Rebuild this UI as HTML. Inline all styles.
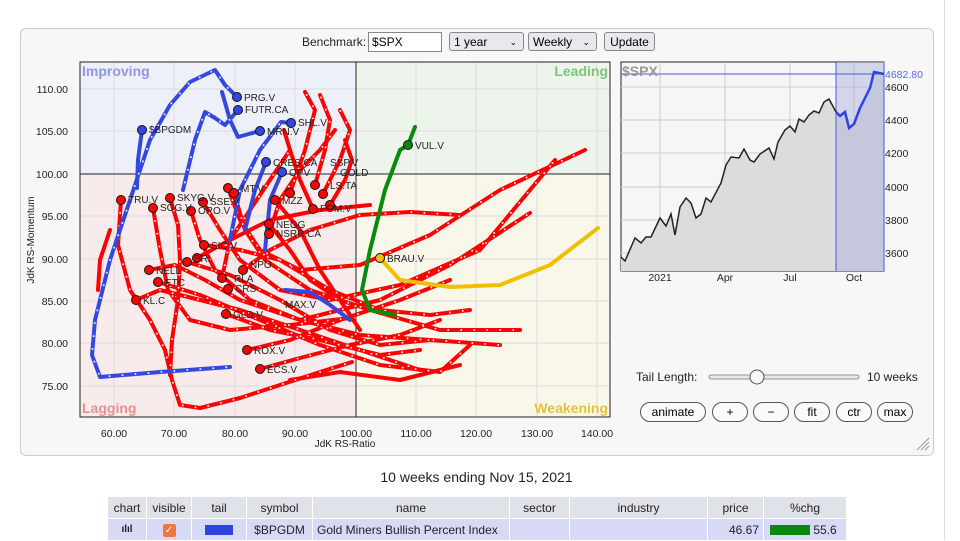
<!DOCTYPE html>
<html><head><meta charset="utf-8">
<style>
body{margin:0;width:960px;height:540px;overflow:hidden;background:#fff;font-family:"Liberation Sans",sans-serif;position:relative}
.box{position:absolute;left:20px;top:28px;width:912px;height:426px;background:#f7f7f8;border:1px solid #ccc;border-radius:6px}
.ctl{position:absolute;font-size:12px;color:#222}
.sel{position:absolute;top:32px;height:19px;border:1px solid #888;border-radius:3px;background:#e9e9ed;font-size:12px;line-height:18px;padding-left:4px;box-sizing:border-box}
.btn{position:absolute;top:402px;height:20px;border:1px solid #555;border-radius:10px;background:#fafafa;font-size:12px;text-align:center;line-height:19px;box-sizing:border-box}
table{position:absolute;left:107px;top:496px;border-collapse:collapse;font-size:12px;color:#222;table-layout:fixed;width:739px}
td,th{border:1px solid #fff;font-weight:normal;height:21px;padding:0 4px;text-align:center;white-space:nowrap;overflow:hidden}
th{background:#dfe2e8}
tr.r td{background:#d6daf5}
</style></head><body>
<div class="box"></div>
<div style="position:absolute;left:944px;top:0;width:16px;height:540px;background:#fff;border-left:1px solid #ddd"></div>
<div class="ctl" style="left:302px;top:35px">Benchmark:</div>
<div style="position:absolute;left:368px;top:32px;width:74px;height:20px;border:1px solid #888;background:#fff;font-size:12px;line-height:19px;padding-left:3px;box-sizing:border-box">$SPX</div>
<div class="sel" style="left:449px;width:75px">1 year<span style="position:absolute;right:6px;font-size:9px">&#8964;</span></div>
<div class="sel" style="left:528px;width:69px">Weekly<span style="position:absolute;right:6px;font-size:9px">&#8964;</span></div>
<div class="sel" style="left:604px;width:51px;text-align:center;padding:0">Update</div>

<svg width="960" height="540" style="position:absolute;left:0;top:0" font-family="Liberation Sans,sans-serif">
<rect x="80" y="62" width="276" height="112" fill="#edeff9"/>
<rect x="356" y="62" width="254" height="112" fill="#edf4ec"/>
<rect x="80" y="174" width="276" height="243" fill="#f8ebeb"/>
<rect x="356" y="174" width="254" height="243" fill="#f8f7ea"/>
<g stroke="#ddd" stroke-width="1">
<line x1="114" y1="62" x2="114" y2="417"/><line x1="174" y1="62" x2="174" y2="417"/><line x1="235" y1="62" x2="235" y2="417"/><line x1="295" y1="62" x2="295" y2="417"/><line x1="416" y1="62" x2="416" y2="417"/><line x1="476" y1="62" x2="476" y2="417"/><line x1="537" y1="62" x2="537" y2="417"/><line x1="597" y1="62" x2="597" y2="417"/>
<line x1="80" y1="89" x2="610" y2="89"/><line x1="80" y1="131" x2="610" y2="131"/><line x1="80" y1="216" x2="610" y2="216"/><line x1="80" y1="259" x2="610" y2="259"/><line x1="80" y1="301" x2="610" y2="301"/><line x1="80" y1="343" x2="610" y2="343"/><line x1="80" y1="386" x2="610" y2="386"/>
</g>
<line x1="80" y1="174" x2="610" y2="174" stroke="#222"/>
<line x1="356" y1="62" x2="356" y2="417" stroke="#222"/>
<rect x="80" y="62" width="530" height="355" fill="none" stroke="#222"/>
<g font-size="14" font-weight="bold">
<text x="82" y="76" fill="#8d97e8">Improving</text>
<text x="608" y="76" fill="#7cc47c" text-anchor="end">Leading</text>
<text x="82" y="413" fill="#e89090">Lagging</text>
<text x="608" y="413" fill="#e8c040" text-anchor="end">Weakening</text>
</g>
<g font-size="10.5" fill="#222" text-anchor="end">
<text x="68" y="93">110.00</text><text x="68" y="135">105.00</text><text x="68" y="178">100.00</text><text x="68" y="220">95.00</text><text x="68" y="263">90.00</text><text x="68" y="305">85.00</text><text x="68" y="347">80.00</text><text x="68" y="390">75.00</text>
</g>
<g font-size="10.5" fill="#222" text-anchor="middle">
<text x="114" y="437">60.00</text><text x="174" y="437">70.00</text><text x="235" y="437">80.00</text><text x="295" y="437">90.00</text><text x="356" y="437">100.00</text><text x="416" y="437">110.00</text><text x="476" y="437">120.00</text><text x="537" y="437">130.00</text><text x="597" y="437">140.00</text>
<text x="345" y="447" font-size="10">JdK RS-Ratio</text>
</g>
<text x="34" y="240" font-size="10" fill="#222" text-anchor="middle" transform="rotate(-90 34 240)">JdK RS-Momentum</text>

<g fill="none" stroke-linejoin="round" stroke-linecap="round">
<g stroke="#f00" stroke-width="4">
<path d="M121,200 L118,245 L130,290 L150,320 L165,350 L172,380 L180,405 L200,408 L240,398 L280,385 L320,372 L352,362"/>
<path d="M170,198 L178,225 L180,260 L178,300 L172,340 L170,375"/>
<path d="M153,208 L160,250 L168,290 L190,320 L230,330 L290,325 L350,318"/>
<path d="M136,300 L160,290 L200,300 L240,310 L300,330 L360,350 L420,370"/>
<path d="M149,270 L175,265 L205,280 L240,300 L300,320 L360,335 L430,340 L500,345"/>
<path d="M158,282 L200,295 L260,320 L320,345 L380,365 L440,372 L470,345"/>
<path d="M191,211 L200,240 L215,270 L250,300 L300,320 L380,300 L450,265 L530,213"/>
<path d="M203,202 L220,230 L240,260 L280,290 L330,300 L400,285 L480,250 L555,160"/>
<path d="M228,188 L240,220 L260,250 L300,270 L360,265 L430,235 L500,190 L585,150"/>
<path d="M234,193 L245,230 L265,260 L310,290 L370,310 L440,330 L520,330"/>
<path d="M204,245 L240,250 L280,260 L330,290 L380,310 L430,315 L470,310"/>
<path d="M187,262 L230,275 L280,300 L330,330 L380,345 L430,340"/>
<path d="M226,314 L270,330 L320,340 L380,355 L420,350"/>
<path d="M247,350 L290,340 L340,320 L400,300 L450,280"/>
<path d="M260,369 L300,358 L350,345 L400,335 L440,320"/>
<path d="M269,224 L290,250 L310,280 L340,300 L360,330"/>
<path d="M275,200 L300,230 L320,270 L340,300"/>
<path d="M315,185 L325,150 L330,120 L320,95"/>
<path d="M323,194 L340,160 L350,130 L340,110"/>
<path d="M290,193 L305,150 L315,110 L305,92"/>
<path d="M330,205 L345,180 L352,160 L345,140"/>
<path d="M313,209 L300,180 L290,150 L284,130"/>
<path d="M269,234 L280,200 L300,170 L320,150 L335,130"/>
<path d="M222,278 L230,240 L250,210 L270,180 L290,150"/>
<path d="M243,270 L270,250 L310,230 L360,215 L410,212 L460,215"/>
<path d="M197,258 L230,240 L270,220 L320,210 L370,205"/>
<path d="M110,230 L100,260 L98,290"/>
<path d="M290,380 L340,372 L400,380 L460,365"/>
</g>
<g stroke="#fff" stroke-width="2" stroke-dasharray="0 13" opacity=".9">
<path d="M121,200 L118,245 L130,290 L150,320 L165,350 L172,380 L180,405 L200,408 L240,398 L280,385 L320,372 L352,362"/>
<path d="M170,198 L178,225 L180,260 L178,300 L172,340 L170,375"/>
<path d="M153,208 L160,250 L168,290 L190,320 L230,330 L290,325 L350,318"/>
<path d="M136,300 L160,290 L200,300 L240,310 L300,330 L360,350 L420,370"/>
<path d="M149,270 L175,265 L205,280 L240,300 L300,320 L360,335 L430,340 L500,345"/>
<path d="M158,282 L200,295 L260,320 L320,345 L380,365 L440,372 L470,345"/>
<path d="M191,211 L200,240 L215,270 L250,300 L300,320 L380,300 L450,265 L530,213"/>
<path d="M203,202 L220,230 L240,260 L280,290 L330,300 L400,285 L480,250 L555,160"/>
<path d="M228,188 L240,220 L260,250 L300,270 L360,265 L430,235 L500,190 L585,150"/>
<path d="M234,193 L245,230 L265,260 L310,290 L370,310 L440,330 L520,330"/>
<path d="M204,245 L240,250 L280,260 L330,290 L380,310 L430,315 L470,310"/>
<path d="M187,262 L230,275 L280,300 L330,330 L380,345 L430,340"/>
<path d="M226,314 L270,330 L320,340 L380,355 L420,350"/>
<path d="M247,350 L290,340 L340,320 L400,300 L450,280"/>
<path d="M260,369 L300,358 L350,345 L400,335 L440,320"/>
<path d="M315,185 L325,150 L330,120 L320,95"/>
<path d="M323,194 L340,160 L350,130 L340,110"/>
<path d="M290,193 L305,150 L315,110 L305,92"/>
<path d="M269,234 L280,200 L300,170 L320,150 L335,130"/>
<path d="M222,278 L230,240 L250,210 L270,180 L290,150"/>
<path d="M243,270 L270,250 L310,230 L360,215 L410,212 L460,215"/>
</g>
<g stroke="#3348e0" stroke-width="4">
<path d="M237,97 L225,85 L215,70 L190,82 L170,105 L150,140 L130,200 L110,260 L95,320 L92,355 L100,377 L160,372 L230,367"/>
<path d="M142,130 L138,160 L137,188"/>
<path d="M238,110 L225,125 L215,118 L205,112 L195,140 L183,190"/>
<path d="M260,131 L245,135 L238,137 L230,120 L222,92"/>
<path d="M291,123 L281,122 L260,150 L240,190 L230,240"/>
<path d="M266,162 L255,190 L245,230"/>
<path d="M282,172 L270,200 L265,250"/>
<path d="M285,290 L310,292 L330,305 L350,320"/>
</g>
<g stroke="#fff" stroke-width="2" stroke-dasharray="0 13" opacity=".9">
<path d="M237,97 L225,85 L215,70 L190,82 L170,105 L150,140 L130,200 L110,260 L95,320 L92,355 L100,377 L160,372 L230,367"/>
<path d="M238,110 L225,125 L215,118 L205,112 L195,140 L183,190"/>
<path d="M291,123 L281,122 L260,150 L240,190 L230,240"/>
</g>
<path d="M408,145 L415,127 M395,315 L370,310 L362,290 L370,250 L385,190 L400,150 L408,145" stroke="#0a8a0a" stroke-width="4"/>
<path d="M380,258 L400,280 L450,287 L500,285 L550,265 L598,228" stroke="#f0c000" stroke-width="4"/>
</g>
<g stroke="#111" stroke-width="1">
<circle cx="142" cy="130" r="4.5" fill="#3348e0"/><circle cx="237" cy="97" r="4.5" fill="#3348e0"/><circle cx="238" cy="110" r="4.5" fill="#3348e0"/><circle cx="260" cy="131" r="4.5" fill="#3348e0"/><circle cx="291" cy="123" r="4.5" fill="#3348e0"/><circle cx="266" cy="162" r="4.5" fill="#3348e0"/><circle cx="282" cy="172" r="4.5" fill="#3348e0"/>
<circle cx="408" cy="145" r="4.5" fill="#0a8a0a"/><circle cx="380" cy="258" r="4.5" fill="#f0c000"/>
<g fill="#f00">
<circle cx="121" cy="200" r="4.5"/><circle cx="170" cy="198" r="4.5"/><circle cx="153" cy="208" r="4.5"/><circle cx="191" cy="211" r="4.5"/><circle cx="203" cy="202" r="4.5"/><circle cx="228" cy="188" r="4.5"/><circle cx="234" cy="193" r="4.5"/><circle cx="275" cy="200" r="4.5"/><circle cx="290" cy="193" r="4.5"/><circle cx="315" cy="185" r="4.5"/><circle cx="323" cy="194" r="4.5"/><circle cx="313" cy="209" r="4.5"/><circle cx="330" cy="205" r="4.5"/><circle cx="269" cy="224" r="4.5"/><circle cx="269" cy="234" r="4.5"/><circle cx="204" cy="245" r="4.5"/><circle cx="187" cy="262" r="4.5"/><circle cx="197" cy="258" r="4.5"/><circle cx="149" cy="270" r="4.5"/><circle cx="158" cy="282" r="4.5"/><circle cx="222" cy="278" r="4.5"/><circle cx="228" cy="289" r="4.5"/><circle cx="243" cy="270" r="4.5"/><circle cx="226" cy="314" r="4.5"/><circle cx="247" cy="350" r="4.5"/><circle cx="260" cy="369" r="4.5"/><circle cx="136" cy="300" r="4.5"/>
</g></g>
<g font-size="10" fill="#222">
<text x="149" y="133">$BPGDM</text><text x="244" y="101">PRG.V</text><text x="245" y="113">FUTR.CA</text><text x="267" y="135">MRN.V</text><text x="298" y="126">SHL.V</text><text x="273" y="166">CRES.CA</text><text x="289" y="176">OPV</text><text x="330" y="166">SSP.V</text><text x="340" y="176">GOLD</text>
<text x="415" y="149">VUL.V</text><text x="387" y="262">BRAU.V</text>
<text x="128" y="203">TRU.V</text><text x="177" y="201">SKYG.V</text><text x="160" y="211">SGG.V</text><text x="198" y="214">ORO.V</text><text x="210" y="205">SSE.V</text><text x="241" y="192">MT.V</text><text x="282" y="204">MZZ</text><text x="330" y="189">LS.TA</text><text x="320" y="212">FOM.V</text><text x="276" y="228">NEGG</text><text x="276" y="237">NSRR.CA</text><text x="211" y="249">SIC.V</text><text x="194" y="262">BRI</text><text x="156" y="274">NELL</text><text x="165" y="286">ETC</text><text x="250" y="268">NPO</text><text x="234" y="282">RLA</text><text x="235" y="292">CRS</text><text x="233" y="318">GLD.V</text><text x="254" y="354">ROX.V</text><text x="267" y="373">ECS.V</text><text x="143" y="304">KL.C</text><text x="285" y="308">MAX.V</text>
</g>

<rect x="621" y="62" width="263" height="209" fill="#f6f6f6" stroke="#222"/>
<g stroke="#ccc"><line x1="660" y1="62" x2="660" y2="271"/><line x1="725" y1="62" x2="725" y2="271"/><line x1="790" y1="62" x2="790" y2="271"/><line x1="854" y1="62" x2="854" y2="271"/>
<line x1="621" y1="87" x2="884" y2="87"/><line x1="621" y1="120" x2="884" y2="120"/><line x1="621" y1="153" x2="884" y2="153"/><line x1="621" y1="187" x2="884" y2="187"/><line x1="621" y1="220" x2="884" y2="220"/><line x1="621" y1="253" x2="884" y2="253"/></g>
<path d="M621,257 L625,261 L635,238 L641,243 L646,237 L651,237 L660,218 L666,226 L671,214 L675,235 L680,207 L686,198 L691,203 L696,218 L701,214 L706,198 L711,202 L721,183 L726,165 L731,157 L739,158 L744,149 L750,160 L754,162 L760,154 L769,148 L774,159 L778,142 L785,130 L790,126 L795,132 L799,119 L804,122 L809,115 L814,111 L819,113 L824,102 L829,99 L836,112 L840,116 L845,112 L849,128 L854,124 L860,108 L870,88 L874,72 L879,73 L884,74 L884,271 L621,271Z" fill="#dcdcdc"/>
<rect x="836" y="62" width="48" height="209" fill="#a8acdc" opacity=".45"/>
<line x1="836" y1="62" x2="836" y2="271" stroke="#4a5ae0"/>
<line x1="884" y1="62" x2="884" y2="271" stroke="#4a5ae0"/>
<line x1="621" y1="74" x2="884" y2="74" stroke="#4a5ae0"/>
<path d="M621,257 L625,261 L635,238 L641,243 L646,237 L651,237 L660,218 L666,226 L671,214 L675,235 L680,207 L686,198 L691,203 L696,218 L701,214 L706,198 L711,202 L721,183 L726,165 L731,157 L739,158 L744,149 L750,160 L754,162 L760,154 L769,148 L774,159 L778,142 L785,130 L790,126 L795,132 L799,119 L804,122 L809,115 L814,111 L819,113 L824,102 L829,99 L836,112" fill="none" stroke="#222" stroke-width="1.5"/>
<path d="M836,112 L840,116 L845,112 L849,128 L854,124 L860,108 L870,88 L874,72 L879,73 L884,74" fill="none" stroke="#2e44e0" stroke-width="2.5"/>
<text x="622" y="76" font-size="14" font-weight="bold" fill="#999">$SPX</text>
<g font-size="10.5" fill="#222"><text x="885" y="91">4600</text><text x="885" y="124">4400</text><text x="885" y="157">4200</text><text x="885" y="191">4000</text><text x="885" y="224">3800</text><text x="885" y="257">3600</text>
<text x="660" y="281" text-anchor="middle">2021</text><text x="725" y="281" text-anchor="middle">Apr</text><text x="790" y="281" text-anchor="middle">Jul</text><text x="854" y="281" text-anchor="middle">Oct</text></g>
<text x="885" y="78" font-size="10.5" fill="#5a6ae8">4682.80</text>

<text x="636" y="381" font-size="12" fill="#222">Tail Length:</text>
<rect x="709" y="375" width="150" height="4" rx="2" fill="#e8e8e8" stroke="#777" stroke-width=".8"/>
<circle cx="757" cy="377" r="7" fill="#f6f6f6" stroke="#555"/>
<text x="867" y="381" font-size="12" fill="#222">10 weeks</text>
<g stroke="#999"><line x1="917" y1="450" x2="929" y2="438"/><line x1="921" y1="450" x2="929" y2="442"/><line x1="925" y1="450" x2="929" y2="446"/></g>
</svg>
<div class="btn" style="left:640px;width:66px">animate</div>
<div class="btn" style="left:712px;width:36px">+</div>
<div class="btn" style="left:753px;width:36px">&minus;</div>
<div class="btn" style="left:794px;width:36px">fit</div>
<div class="btn" style="left:836px;width:36px">ctr</div>
<div class="btn" style="left:877px;width:36px">max</div>

<div style="position:absolute;left:0;width:953px;top:469px;text-align:center;font-size:14px;color:#222">10 weeks ending Nov 15, 2021</div>
<table>
<colgroup><col style="width:39px"><col style="width:45px"><col style="width:55px"><col style="width:66px"><col style="width:197px"><col style="width:60px"><col style="width:138px"><col style="width:56px"><col style="width:83px"></colgroup>
<tr><th>chart</th><th>visible</th><th>tail</th><th>symbol</th><th>name</th><th>sector</th><th>industry</th><th>price</th><th>%chg</th></tr>
<tr class="r"><td style="font-size:10px;font-weight:bold">ılıl</td><td><span style="display:inline-block;width:13px;height:13px;background:#f0773e;border-radius:2px;color:#fff;font-size:10px;line-height:13px">✓</span></td><td><span style="display:inline-block;width:28px;height:10px;background:#2e44e0;vertical-align:middle"></span></td><td>$BPGDM</td><td style="text-align:left">Gold Miners Bullish Percent Index</td><td></td><td></td><td style="text-align:right">46.67</td><td style="text-align:left;padding-left:6px"><span style="display:inline-block;width:40px;height:10px;background:#0a8a0a;vertical-align:middle"></span> 55.6</td></tr>
</table>
</body></html>
